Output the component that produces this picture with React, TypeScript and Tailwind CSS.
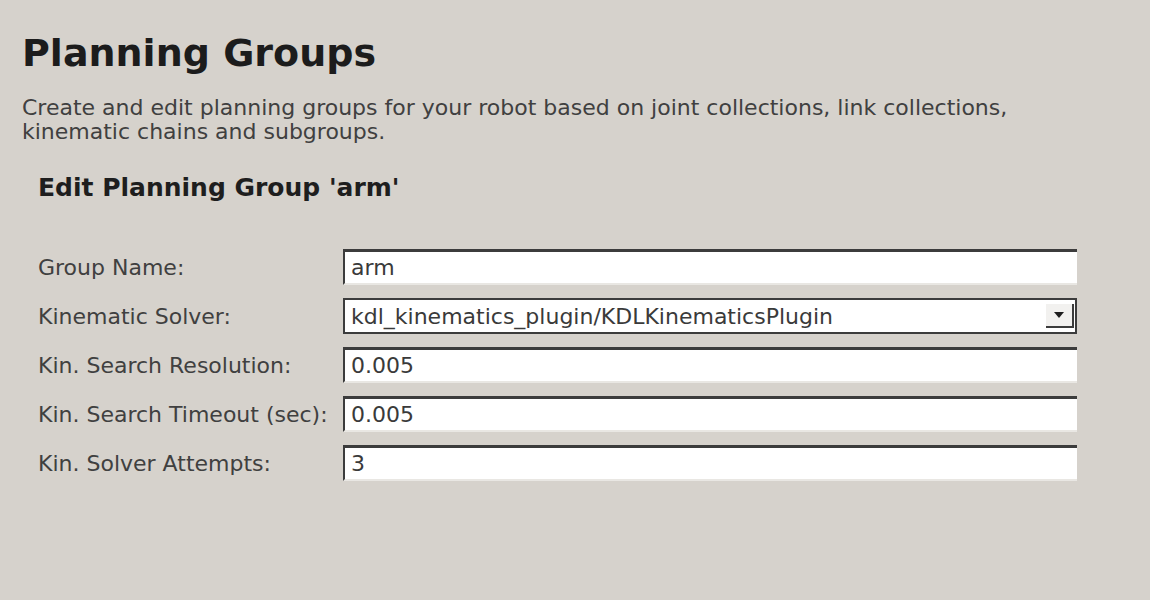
import React from 'react';

const fields = [
  { label: 'Group Name:', value: 'arm', combo: false },
  { label: 'Kinematic Solver:', value: 'kdl_kinematics_plugin/KDLKinematicsPlugin', combo: true },
  { label: 'Kin. Search Resolution:', value: '0.005', combo: false },
  { label: 'Kin. Search Timeout (sec):', value: '0.005', combo: false },
  { label: 'Kin. Solver Attempts:', value: '3', combo: false },
];

const Field: React.FC<{ value: string; combo: boolean }> = ({ value, combo }) => {
  if (combo) {
    return (
      <div className="flex h-[36px] w-[734px] items-stretch border-2 border-[#3c3c3c] bg-white">
        <div className="flex flex-1 items-center pl-[6px] text-[22px] text-[#3a3a3a]">{value}</div>
        <div className="my-[4px] mr-[1px] flex w-[28px] items-center justify-center border-b-2 border-r-2 border-[#3c3c3c] bg-[#f2f1ef]">
          <svg width="10" height="7" viewBox="0 0 10 7">
            <polygon points="0,0 10,0 5,6" fill="#1e1e1e" />
          </svg>
        </div>
      </div>
    );
  }
  return (
    <div className="flex h-[36px] w-[734px] items-center border-l-2 border-t-[3px] border-b-2 border-b-[#e9e7e3] border-l-[#3c3c3c] border-t-[#3c3c3c] bg-white pl-[6px] text-[22px] text-[#3a3a3a]">
      {value}
    </div>
  );
};

export default function App() {
  return (
    <div
      className="h-[600px] w-[1150px] overflow-hidden bg-[#d6d2cc] text-[#2a2a2a]"
      style={{ fontFamily: '"DejaVu Sans", Verdana, sans-serif' }}
    >
      <div className="pl-[22px] pt-[31px]">
        <h1 className="text-[38px] font-bold leading-[44px] text-[#1c1c1c]">Planning Groups</h1>
        <p className="mt-[21px] w-[1040px] text-[22px] leading-[24px] text-[#404040]">
          Create and edit planning groups for your robot based on joint collections, link collections,
          kinematic chains and subgroups.
        </p>
        <div className="pl-[16px]">
          <h2 className="mt-[29px] text-[25px] font-bold leading-[30px] text-[#1e1e1e]">
            Edit Planning Group 'arm'
          </h2>
          <div className="mt-[46px] flex flex-col gap-[13px]">
            {fields.map((f) => (
              <div key={f.label} className="flex items-center">
                <div className="w-[305px] text-[22px] text-[#404040]">{f.label}</div>
                <Field value={f.value} combo={f.combo} />
              </div>
            ))}
          </div>
        </div>
      </div>
    </div>
  );
}
